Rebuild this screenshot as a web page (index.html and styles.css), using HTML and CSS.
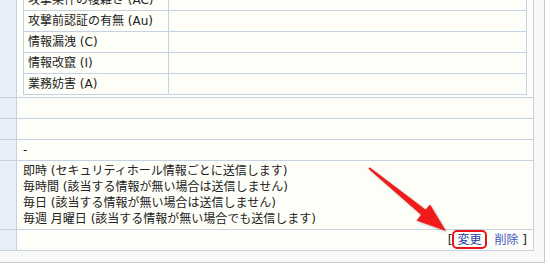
FILE: index.html
```html
<!DOCTYPE html>
<html lang="ja">
<head>
  <meta charset="UTF-8">
  <title>通知設定</title>
  <link rel="stylesheet" href="styles.css">
</head>
<body>
  <div class="panel">
    <table class="grid">
      <tr>
        <td class="side"></td>
        <td class="nest">
          <table class="sub">
            <tr><td class="sub-key">攻撃条件の複雑さ (AC)</td><td></td></tr>
            <tr><td class="sub-key">攻撃前認証の有無 (Au)</td><td></td></tr>
            <tr><td class="sub-key">情報漏洩 (C)</td><td></td></tr>
            <tr><td class="sub-key">情報改竄 (I)</td><td></td></tr>
            <tr><td class="sub-key">業務妨害 (A)</td><td></td></tr>
          </table>
        </td>
      </tr>
      <tr><td class="side"></td><td>&nbsp;</td></tr>
      <tr><td class="side"></td><td>&nbsp;</td></tr>
      <tr><td class="side"></td><td>-</td></tr>
      <tr>
        <td class="side"></td>
        <td>
          即時 (セキュリティホール情報ごとに送信します)<br>
          毎時間 (該当する情報が無い場合は送信しません)<br>
          毎日 (該当する情報が無い場合は送信しません)<br>
          毎週 月曜日 (該当する情報が無い場合でも送信します)
        </td>
      </tr>
      <tr>
        <td class="side"></td>
        <td class="actions">[<a href="#" class="link mark">変更</a><a href="#" class="link link-del">削除</a> ]</td>
      </tr>
    </table>
  </div>

  <!-- annotation arrow pointing at the edit link -->
  <svg class="arrow" width="550" height="268" viewBox="0 0 550 268">
    <polygon points="369.6,167.2 425.5,209.6 430,204.5 446,231 416.5,220.5 421,214.8 368.4,168.8" fill="#f21b1b"/>
  </svg>
</body>
</html>
```

FILE: styles.css
```css
body {
  margin: 0;
  background: #fff;
  font-family: "DejaVu Sans", "Noto Sans CJK JP", sans-serif;
  font-size: 12px;
  color: #222;
}
.panel {
  width: 534px;
  margin-top: -13px;
  padding: 0 10px 11px 0;
  background: #f8f8f8;
  border-right: 1px solid #c9c9c9;
  border-bottom: 1px solid #c9c9c9;
}
.grid {
  width: 534px;
  border-spacing: 0;
  table-layout: fixed;
  background: #fefef8;
}
.grid td {
  box-sizing: border-box;
  border-right: 1px solid #c5d2e3;
  border-bottom: 1px solid #c5d2e3;
  padding: 2px 6px;
  line-height: 16px;
  vertical-align: top;
  white-space: nowrap;
}
.grid td.side {
  width: 17px;
  padding: 0;
  background: #e9eff9;
}
.grid td.nest {
  padding: 2px 6px;
}
.sub {
  width: 504px;
  border-spacing: 0;
  table-layout: fixed;
  border-top: 1px solid #c5d2e3;
  border-left: 1px solid #c5d2e3;
}
.grid .sub td {
  padding: 2px 4px;
}
.grid .sub td.sub-key {
  width: 145px;
}
.actions {
  text-align: right;
}
.link {
  color: #1f3f9f;
  text-decoration: none;
  margin-left: 5px;
}
.link-del {
  color: #3f55c0;
  margin-left: 13px;
}
.mark {
  position: relative;
}
.mark::after {
  content: '';
  position: absolute;
  left: -5px;
  right: -6px;
  top: -3px;
  bottom: -2px;
  border: 2px solid #e8141b;
  border-radius: 5px;
}
.arrow {
  position: absolute;
  left: 0;
  top: 0;
  pointer-events: none;
  filter: drop-shadow(1px 1px 1px rgba(0, 0, 0, 0.3));
}
```
